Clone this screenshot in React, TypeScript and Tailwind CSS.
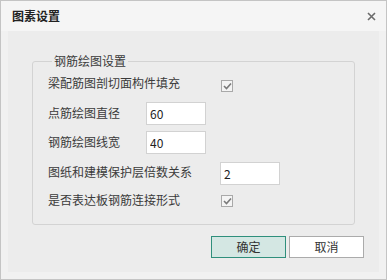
import { useState } from 'react'

function Check({ checked }: { checked: boolean }) {
  return (
    <span className="flex h-[12px] w-[12px] items-center justify-center border border-[#a9a9a9] bg-[#f4f4f4]">
      {checked && (
        <svg width="9" height="8" viewBox="0 0 9 8">
          <path d="M1 4 L3.5 6.5 L8 1.5" fill="none" stroke="#7a7a7a" strokeWidth="1.6" />
        </svg>
      )}
    </span>
  )
}

function Field({ value, onChange }: { value: string; onChange: (v: string) => void }) {
  return (
    <input
      value={value}
      onChange={(e) => onChange(e.target.value)}
      className="h-[23px] w-[60px] border border-[#d2d2d2] bg-white px-[3px] text-[12px] text-[#222] outline-none"
    />
  )
}

export default function App() {
  const [dia, setDia] = useState('60')
  const [width, setWidth] = useState('40')
  const [ratio, setRatio] = useState('2')

  return (
    <div
      className="flex h-[280px] w-[387px] flex-col border border-[#c4c4c4] bg-[#f1f1f1] text-[12px] leading-[16px] text-[#3a3a3a]"
      style={{ fontFamily: '"Microsoft YaHei", "Noto Sans CJK SC", sans-serif' }}
    >
      {/* Title bar */}
      <div className="flex h-[30px] items-center justify-between bg-[#f5f5f5] pl-[11px] pr-[10px]">
        <span className="font-bold text-[#222]">图素设置</span>
        <svg width="9" height="9" viewBox="0 0 9 9" className="mt-[1px]">
          <path d="M1 1 L8 8 M8 1 L1 8" stroke="#6b6b6b" strokeWidth="1.6" />
        </svg>
      </div>

      {/* Body */}
      <div className="mx-[7px] mb-[7px] flex flex-1 flex-col bg-[#ececec] pt-[22px]">
        <fieldset className="mx-[24px] h-[172px] rounded-[3px] border border-[#d3d3d3] pl-[15px]">
          <legend className="ml-[4px] px-[2px]">钢筋绘图设置</legend>
          <div className="mt-[6px] flex h-[22px] items-center">
            <span className="mt-[-6px] w-[173px]">梁配筋图剖切面构件填充</span>
            <Check checked />
          </div>
          <div className="mt-[5px] flex h-[23px] items-center">
            <span className="mt-[-2px] w-[98px]">点筋绘图直径</span>
            <Field value={dia} onChange={setDia} />
          </div>
          <div className="mt-[6px] flex h-[23px] items-center">
            <span className="mt-[-2px] w-[98px]">钢筋绘图线宽</span>
            <Field value={width} onChange={setWidth} />
          </div>
          <div className="mt-[8px] flex h-[23px] items-center">
            <span className="mt-[-3px] w-[172px]">图纸和建模保护层倍数关系</span>
            <Field value={ratio} onChange={setRatio} />
          </div>
          <div className="mt-[5px] flex h-[22px] items-center">
            <span className="mt-[-2px] w-[173px]">是否表达板钢筋连接形式</span>
            <Check checked />
          </div>
        </fieldset>

        <div className="mr-[15px] mt-[11px] flex justify-end gap-[3px]">
          <button className="h-[22px] w-[75px] border border-[#2f8f7c] bg-[#d4e7e3] text-[#333]">确定</button>
          <button className="h-[22px] w-[75px] border border-[#ababab] bg-white text-[#333]">取消</button>
        </div>
      </div>
    </div>
  )
}
